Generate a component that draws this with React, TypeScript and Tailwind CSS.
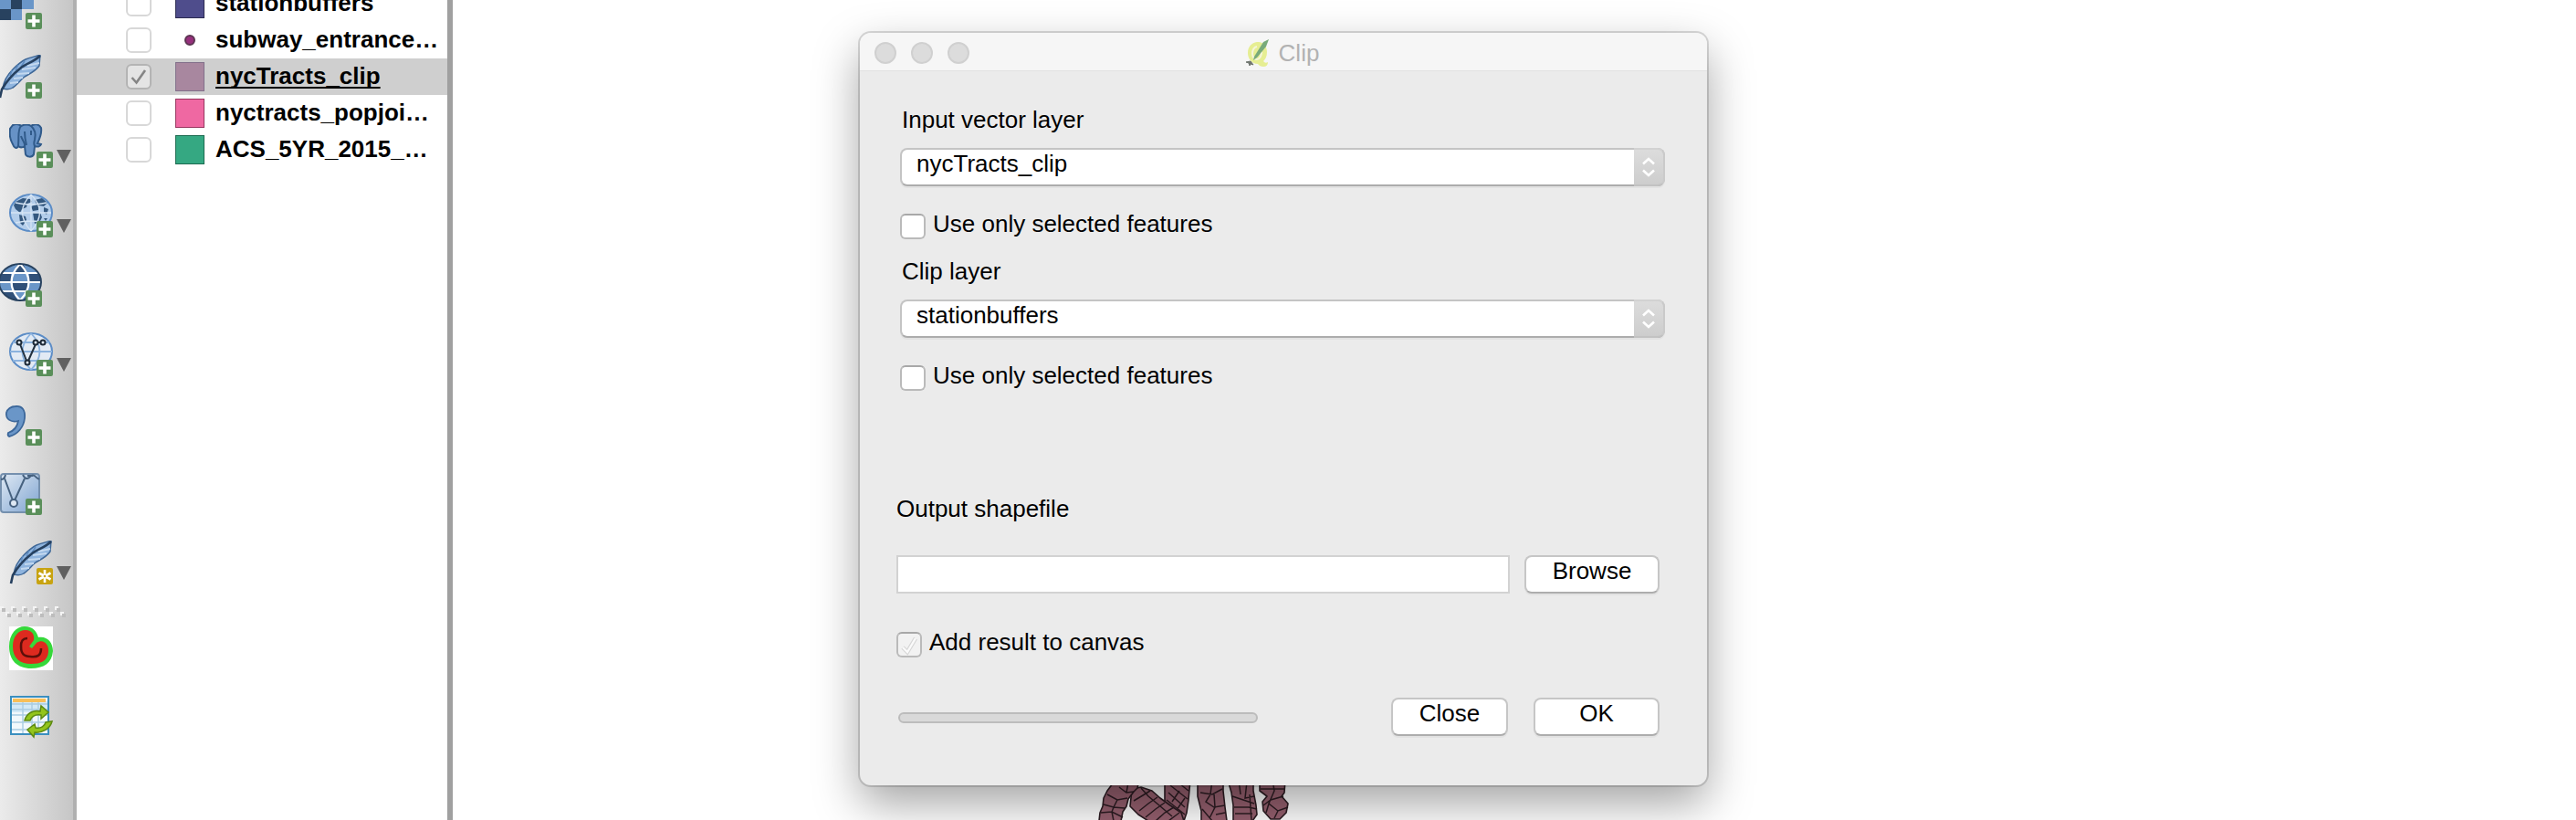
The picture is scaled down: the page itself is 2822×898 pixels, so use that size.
import React from "react";

type IconProps = { children: React.ReactNode };

function Icon({ children }: IconProps) {
  return (
    <svg viewBox="0 0 48 48" className="block h-12 w-12 shrink-0" aria-hidden="true">
      {children}
    </svg>
  );
}

function PlusBadge() {
  return (
    <g>
      <rect x="30" y="30" width="18" height="18" rx="2" fill="#5a8f5a" />
      <path d="M39 32.5v13M32.5 39h13" stroke="#fff" strokeWidth="3.6" />
    </g>
  );
}

function Feather() {
  return (
    <g>
      <path
        d="M46 0C40 2 35 3 30 5C24 8 20 12 16 16C10 22 6 29 5 37C9 38 13 38 16 36C21 33 24 28 29 24C34 21 41 18 45 12Z"
        fill="#8fb4de"
        stroke="#3f6898"
        strokeWidth="1.5"
      />
      <path d="M17 26l10-1M21 21l13-1M26 16l15-2M32 12l13-3M13 31l9-1" stroke="#c3d8ef" strokeWidth="2.2" />
      <path d="M19 17l3-6M25 13l4-6M13 23l2-6" stroke="#5f8cc0" strokeWidth="1.5" />
      <path d="M46 1C39 8 31 9 24 15C15 22 8 31 4 38L2 47" fill="none" stroke="#26405f" strokeWidth="2.6" />
    </g>
  );
}

function RasterIcon() {
  return (
    <Icon>
      <rect x="2" y="2" width="37" height="24" fill="#6a96c8" />
      <path d="M14 14h12v12H14zM2 26h12v12H2zM26 2h13v12H26z" fill="#28425f" />
      <rect x="14" y="26" width="12" height="12" fill="#6a96c8" />
      <PlusBadge />
    </Icon>
  );
}

function VectorIcon() {
  return (
    <Icon>
      <Feather />
      <PlusBadge />
    </Icon>
  );
}

function ElephantIcon() {
  return (
    <Icon>
      <path
        d="M4 1C8-1 11 0 13 2C17 0 21 0 24 2C28-1 33 0 35 4C36 10 34 15 31 21L35 22C34 25 31 25 28 24L27 33C25 37 19 36 18 33L17 24C14 26 12 26 10 24C8 28 5 25 4 22C1 17 0 12 1 5Z"
        fill="#6792c6"
        stroke="#305a8a"
        strokeWidth="2"
      />
      <path
        d="M13 2C9 7 11 12 10 24M17 24C18 21 14 17 13 13M24 2C30 7 29 13 28 17C27 20 27 22 28 24M17 8C17 14 18 19 19 23M24 7v5"
        fill="none"
        stroke="#305a8a"
        strokeWidth="2"
      />
      <PlusBadge />
    </Icon>
  );
}

function WorldIcon() {
  return (
    <Icon>
      <ellipse cx="24" cy="21" rx="23" ry="20" fill="#b3cdea" stroke="#5b8cc6" strokeWidth="2" />
      <path
        d="M7 9l8-4 8 1 2 3-5 2-1 4-5 2-2 4-5-4-2-4zM28 7l8-2 6 5-4 4-5-1-1 5-6 1-2-5 6-2zM11 23l7 2 1 4-4 6-3-3zM26 21l8 0 2 5-4 8-4-1-1-6zM38 15l5 2-2 6-3-3zM38 27l4 0-2 3z"
        fill="#34587f"
      />
      <path d="M2 21h44M24 1v40M7 10Q24 14 41 10M7 32Q24 28 41 32M24 1Q5 20 24 41M24 1Q43 20 24 41" fill="none" stroke="#d5e4f4" strokeWidth="1.3" />
      <PlusBadge />
    </Icon>
  );
}

function GlobeIcon() {
  return (
    <Icon>
      <defs>
        <clipPath id="globe-outline">
          <ellipse cx="24" cy="21" rx="23" ry="20" />
        </clipPath>
      </defs>
      <g clipPath="url(#globe-outline)">
        <rect width="48" height="42" fill="#6a96c8" />
        <path d="M0 11h14v10H0zM34 11h14v10H34zM16 21h17v10H16zM17 11L22 0h5l5 11z" fill="#305078" />
        <path d="M0 31h16q3 7 7 11H0zM33 31h15v11H26q4-4 7-11z" fill="#305078" />
        <path d="M0 21h48M0 11h48M0 31h48M24 1Q5 21 24 41M24 1Q43 21 24 41" fill="none" stroke="#fff" strokeWidth="2.2" />
      </g>
      <ellipse cx="24" cy="21" rx="23" ry="20" fill="none" stroke="#28425f" strokeWidth="2" />
      <PlusBadge />
    </Icon>
  );
}

function WfsIcon() {
  return (
    <Icon>
      <ellipse cx="24" cy="21" rx="23" ry="20" fill="#e2eaf4" stroke="#5b8cc6" strokeWidth="2" />
      <path d="M1 21h46M4 11h40M4 31h40M24 1Q5 21 24 41M24 1Q43 21 24 41" fill="none" stroke="#8bb2de" strokeWidth="1.8" />
      <path d="M12 13l7 18M21 31l8-18M31 11h5" stroke="#22303f" strokeWidth="2" />
      <g fill="#dfe8f2" stroke="#1d2936" strokeWidth="2">
        <circle cx="11" cy="11" r="2.5" />
        <circle cx="29" cy="11" r="2.5" />
        <circle cx="37" cy="11" r="2.5" />
        <circle cx="20" cy="33" r="2.5" />
      </g>
      <PlusBadge />
    </Icon>
  );
}

function CommaIcon() {
  return (
    <Icon>
      <path
        d="M19 5C26 4 30 9 29 18C28 28 21 36 12 38Q10 37 11 34C17 32 21 27 22 21C14 23 8 19 9 12C10 8 14 5 19 5Z"
        fill="#6a96c8"
        stroke="#3c679a"
        strokeWidth="1.8"
      />
      <PlusBadge />
    </Icon>
  );
}

function VirtualIcon() {
  return (
    <Icon>
      <defs>
        <linearGradient id="virtual-fill" x1="0" y1="0" x2="1" y2="1">
          <stop offset="0" stopColor="#dfe9f4" />
          <stop offset="1" stopColor="#7ea3d0" />
        </linearGradient>
      </defs>
      <rect x="3" y="3" width="42" height="42" rx="3" fill="url(#virtual-fill)" stroke="#7590ae" strokeWidth="2" />
      <path d="M7 8l9 24M18 32l11-24M32 5h6" stroke="#46617f" strokeWidth="2" />
      <path d="M3 9q4 0 5-5M27 4q3 6 7 3q4-5 8 0l3 2" fill="none" stroke="#46617f" strokeWidth="2" />
      <circle cx="17" cy="35" r="4" fill="#dfe9f4" stroke="#46617f" strokeWidth="2" />
      <PlusBadge />
    </Icon>
  );
}

function NewLayerIcon() {
  return (
    <Icon>
      <Feather />
      <rect x="30" y="30" width="18" height="18" rx="2" fill="#c8a310" />
      <path d="M39 32v14M32.5 35.5l13 7M32.5 42.5l13-7" stroke="#fff" strokeWidth="2.6" />
      <circle cx="39" cy="39" r="1.3" fill="#c8a310" />
    </Icon>
  );
}

function BufferIcon() {
  return (
    <Icon>
      <rect width="48" height="48" fill="#fff" />
      <path
        d="M17 0C26 0 30 5 32 12C41 10 48 17 48 27C47 40 38 46 24 46C9 46 0 37 0 22C0 8 8 0 17 0Z"
        fill="#36d83a"
      />
      <path
        d="M18 4C25 4 28 9 27 15L22 22L25 24L30 18C37 13 44 19 43 28C42 38 35 41 24 41C11 41 4 34 4 22C4 11 10 4 18 4Z"
        fill="#dd2a1f"
      />
      <path d="M20 13C14 13 13 17 13 22C13 30 16 33 23 33C31 34 35 32 35 24" fill="none" stroke="#5c0f0a" strokeWidth="2.6" />
    </Icon>
  );
}

function TableIcon() {
  return (
    <Icon>
      <rect x="2" y="1" width="41" height="41" fill="#f2f8fc" />
      <rect x="3" y="6" width="39" height="12" fill="#d3e9f7" />
      <path d="M3 9h39M3 15h39M3 21h39M3 29h39M3 37h39M15 3v38M25 3v38M32 3v38" stroke="#a9cce2" strokeWidth="1.4" />
      <rect x="4" y="3" width="36" height="4" fill="#f8bf58" />
      <rect x="2" y="1" width="41" height="41" fill="none" stroke="#3b8fbf" strokeWidth="2" />
      <path
        d="M17 27C19 19 27 15 34 17L35 11L43 18L35 25V21C29 20 25 22 23 27Z"
        fill="#93c51c"
        stroke="#5d8a12"
        strokeWidth="1.5"
      />
      <path
        d="M47 28C45 36 36 41 28 40L27 45L20 37L28 31L29 35C35 36 39 33 40 29Z"
        fill="#93c51c"
        stroke="#5d8a12"
        strokeWidth="1.5"
      />
    </Icon>
  );
}

const layerTools = [
  { label: "Add Raster Layer", icon: RasterIcon, menu: false },
  { label: "Add SpatiaLite Layer", icon: VectorIcon, menu: false },
  { label: "Add PostGIS Layers", icon: ElephantIcon, menu: true },
  { label: "Add WMS Layer", icon: WorldIcon, menu: true },
  { label: "Add WCS Layer", icon: GlobeIcon, menu: false },
  { label: "Add WFS Layer", icon: WfsIcon, menu: true },
  { label: "Add Delimited Text Layer", icon: CommaIcon, menu: false },
  { label: "Add Virtual Layer", icon: VirtualIcon, menu: false },
  { label: "New Layer", icon: NewLayerIcon, menu: true },
];

function Toolbar() {
  return (
    <aside className="flex w-[84px] shrink-0 flex-col overflow-hidden border-r-4 border-[#b0b0b0] bg-linear-to-r from-[#ebebeb] to-[#c6c6c6]">
      <div className="-mt-4 flex flex-col gap-7">
        {layerTools.map(({ label, icon: ToolIcon, menu }) => (
          <button
            key={label}
            type="button"
            aria-label={label}
            className={menu ? "flex items-end gap-1 pl-2.5" : "-ml-0.5 flex items-end"}
          >
            <ToolIcon />
            {menu && (
              <svg viewBox="0 0 16 20" className="h-5 w-4 shrink-0" aria-hidden="true">
                <path d="M0 0h16L8 15z" fill="#606060" />
              </svg>
            )}
          </button>
        ))}
      </div>
      <svg viewBox="0 0 72 12" className="mt-6 h-3 w-[72px]" aria-hidden="true">
        {[0, 1, 2, 3, 4, 5].map((i) => (
          <g key={i}>
            <rect x={i * 12} y="0" width="4" height="4" fill="#f4f4f4" />
            <rect x={i * 12 + 2} y="2" width="4" height="4" fill="#bdbdbd" />
            <rect x={i * 12 + 6} y="6" width="4" height="4" fill="#f4f4f4" />
            <rect x={i * 12 + 8} y="8" width="4" height="4" fill="#bdbdbd" />
          </g>
        ))}
      </svg>
      <div className="mt-2.5 flex flex-col gap-7 pl-2.5">
        <button type="button" aria-label="Buffer">
          <BufferIcon />
        </button>
        <button type="button" aria-label="Refresh table">
          <TableIcon />
        </button>
      </div>
    </aside>
  );
}

const layers = [
  { name: "stationbuffers", swatch: "bg-[#4f4d8c] border-[#2b2a50]", checked: false, dot: false },
  { name: "subway_entrance…", swatch: "", checked: false, dot: true },
  { name: "nycTracts_clip", swatch: "bg-[#a8879f] border-[#82708a]", checked: true, dot: false },
  { name: "nyctracts_popjoi…", swatch: "bg-[#ef68a2] border-[#97375f]", checked: false, dot: false },
  { name: "ACS_5YR_2015_…", swatch: "bg-[#35a882] border-[#1d6b50]", checked: false, dot: false },
];

function LayersPanel() {
  return (
    <section aria-label="Layers" className="w-[412px] shrink-0 overflow-hidden border-r-[6px] border-[#a0a0a0] bg-white">
      <ul className="-mt-4">
        {layers.map((layer) => (
          <li
            key={layer.name}
            className={layer.checked ? "flex h-10 items-center bg-[#cfcfcf] pl-[54px]" : "flex h-10 items-center pl-[54px]"}
          >
            <label className="flex items-center">
              <span className="relative block h-7 w-7">
                <input
                  type="checkbox"
                  defaultChecked={layer.checked}
                  className="peer block h-7 w-7 appearance-none rounded-md border-2 border-[#d8d8d8] bg-white checked:border-[#b4b4b4] checked:bg-[#e4e4e4]"
                />
                <svg viewBox="0 0 28 28" className="pointer-events-none absolute inset-0 hidden h-7 w-7 peer-checked:block" aria-hidden="true">
                  <path d="M6.5 15l5 5.5L21 7" fill="none" stroke="#858585" strokeWidth="2.6" />
                </svg>
              </span>
              {layer.dot ? (
                <span className="ml-[36px] mr-[22px] block h-3 w-3 rounded-full border-2 border-[#5c3552] bg-[#96307c]" />
              ) : (
                <span className={"ml-[26px] mr-3 block h-8 w-8 border " + layer.swatch} />
              )}
              <span
                className={
                  layer.checked
                    ? "whitespace-nowrap pb-0.5 leading-[30px] font-bold underline decoration-2 underline-offset-3 [text-decoration-skip-ink:none]"
                    : "whitespace-nowrap pb-0.5 leading-[30px] font-bold"
                }
              >
                {layer.name}
              </span>
            </label>
          </li>
        ))}
      </ul>
    </section>
  );
}

function TractShapes() {
  return (
    <svg viewBox="0 0 214 44" className="absolute bottom-0 left-[704px] h-11 w-[214px]" aria-hidden="true">
      <g fill="#96606f" stroke="#2c1c22" strokeWidth="1.6" strokeLinejoin="round">
        <path d="M76 0L104 0L102 22L100 36L97 45L76 45L76 26Z" />
        <path d="M40 10L50 8L62 12L71 20L82 28L94 36L97 45L58 45L47 38L38 29Z" />
        <path d="M22 0L48 0L46 9L42 13L36 21L34 29L30 35L28 45L4 45L5 36L8 29L9 20L13 12Z" />
        <path d="M112 0L140 0L140 12L142 30L144 45L116 45L116 34L112 18Z" />
        <path d="M145 0L173 0L173 12L176 28L177 38L172 45L151 45L151 28L149 14Z" />
        <path d="M180 0L208 0L207 14L204 18L211 26L209 36L202 43L192 43L184 34L183 24L188 18L180 12Z" />
      </g>
      <path
        d="M13 16L24 22L35 20M9 27L20 30L32 31M6 36L18 35L30 41M26 8L34 14L42 13M24 22L20 30L18 35L20 45M36 3L34 14M42 23L52 17L60 12M48 34L58 26L68 19M55 41L66 32L76 25M66 45L76 36L86 30M80 45L92 36M50 9L58 18L70 28L84 40M80 14L98 30M82 6L101 21M92 4L102 12M78 22L98 38M92 12L84 24M98 20L89 33M115 14L128 16L139 10M128 0L126 16L121 24L130 30L142 28M130 16L131 30L125 42M117 32L128 45M132 38L142 36M157 0L159 16M166 2L164 20L174 18M150 18L162 22L174 26M152 30L168 30L177 32M153 37L172 37M169 16L171 45M181 10L207 10M194 0L196 12L190 26L200 34L211 30M184 28L192 22L206 18M190 26L187 36M200 34L196 42"
        fill="none"
        stroke="#2c1c22"
        strokeWidth="1.5"
      />
    </svg>
  );
}

function LayerSelect({ id, options, value }: { id: string; options: string[]; value: string }) {
  return (
    <div className="relative mt-4">
      <select
        id={id}
        defaultValue={value}
        className="block h-[42px] w-full appearance-none rounded-lg border-2 border-[#c4c4c4] border-b-[#acacac] bg-white pt-0 pb-2 pl-4 leading-[30px] shadow-[0_2px_0_#e2e2e2]"
      >
        {options.map((option) => (
          <option key={option}>{option}</option>
        ))}
      </select>
      <span className="pointer-events-none absolute inset-y-0 right-0 flex w-[34px] items-center justify-center rounded-r-lg border-y-2 border-r-2 border-t-[#d2d2d2] border-r-[#cacaca] border-b-[#c2c2c2] bg-linear-to-b from-[#dcdcdc] to-[#cdcdcd]">
        <svg viewBox="0 0 16 24" className="h-6 w-4" aria-hidden="true">
          <path d="M2 8.5L8 3L14 8.5M2 15.5L8 21L14 15.5" fill="none" stroke="#fff" strokeWidth="2.6" />
        </svg>
      </span>
    </div>
  );
}

function CheckRow({ label, checked = false, className }: { label: string; checked?: boolean; className: string }) {
  return (
    <label className={"flex w-fit items-start gap-2 leading-[30px] " + className}>
      <span className="relative mt-1 block h-7 w-7">
        <input
          type="checkbox"
          defaultChecked={checked}
          className="peer block h-7 w-7 appearance-none rounded-md border-2 border-[#bababa] border-t-[#a8a8a8] bg-white checked:bg-[#f2f2f2]"
        />
        <svg viewBox="0 0 28 28" className="pointer-events-none absolute inset-0 hidden h-7 w-7 peer-checked:block" aria-hidden="true">
          <path d="M7 17l5 5L21 7" fill="none" stroke="#d6d6d6" strokeWidth="4.5" />
          <path d="M7 17l5 5L21 7" fill="none" stroke="#fafafa" strokeWidth="2.4" />
        </svg>
      </span>
      {label}
    </label>
  );
}

function PushButton({ label, className }: { label: string; className: string }) {
  return (
    <button
      type="button"
      className={
        "h-[42px] shrink-0 rounded-lg border-2 border-[#c6c6c6] border-b-[#adadad] bg-white pb-2 leading-[30px] shadow-[0_2px_0_#e2e2e2] " +
        className
      }
    >
      {label}
    </button>
  );
}

function ClipDialog() {
  const names = ["stationbuffers", "nycTracts_clip"];
  return (
    <div
      role="dialog"
      aria-labelledby="clip-title"
      className="absolute top-9 left-[446px] w-[928px] rounded-xl bg-[#ebebeb] shadow-[0_0_0_2px_rgba(0,0,0,0.14),0_20px_50px_rgba(0,0,0,0.36)]"
    >
      <header className="grid h-[42px] grid-cols-3 items-center rounded-t-xl border-b border-[#e2e2e2] bg-[#f6f6f6] pt-[3px]">
        <div className="flex gap-4 pl-4">
          <button type="button" aria-label="Close window" className="h-6 w-6 rounded-full border-2 border-[#d0d0d0] bg-[#dcdcdc]" />
          <button type="button" aria-label="Minimize window" className="h-6 w-6 rounded-full border-2 border-[#d0d0d0] bg-[#dcdcdc]" />
          <button type="button" aria-label="Zoom window" className="h-6 w-6 rounded-full border-2 border-[#d0d0d0] bg-[#dcdcdc]" />
        </div>
        <div className="flex items-center justify-center gap-2.5 pr-0.5">
          <svg viewBox="0 0 26 32" className="h-8 w-[26px]" aria-hidden="true">
            <path
              d="M12 4C19 3 23 9 23 15C23 20 21 23 19 25Q21 28 24 26Q24 31 19 31Q15 31 13 28C6 28 2 22 2 16C2 9 6 5 12 4Z"
              fill="#e6ee93"
            />
            <path d="M12 9C8 10 7 14 7 17C7 20 9 23 12 23C15 23 17 19 17 15" fill="none" stroke="#f5f5dc" strokeWidth="2" />
            <path d="M25 1L19 4L9 20L8 24L12 21L22 9Z" fill="#78aa7a" />
            <path d="M0 26l5-1 3 4-3-1-1 2-1-3z" fill="#6f756f" stroke="#6f756f" />
          </svg>
          <h1 id="clip-title" className="leading-[30px] text-[#b2b2b2]">
            Clip
          </h1>
        </div>
      </header>

      <form onSubmit={(event) => event.preventDefault()} className="pt-[38px] pb-[54px]">
        <div className="pr-[46px] pl-11">
          <label htmlFor="input-layer" className="block pl-0.5 leading-[30px]">
            Input vector layer
          </label>
          <LayerSelect id="input-layer" options={names} value="nycTracts_clip" />
          <CheckRow label="Use only selected features" className="mt-[26px]" />
          <label htmlFor="clip-layer" className="mt-5 block pl-0.5 leading-[30px]">
            Clip layer
          </label>
          <LayerSelect id="clip-layer" options={names} value="stationbuffers" />
          <CheckRow label="Use only selected features" className="mt-[26px]" />
        </div>

        <div className="mt-[114px] pr-[52px] pl-10">
          <label htmlFor="output-file" className="block leading-[30px]">
            Output shapefile
          </label>
          <div className="mt-9 flex gap-4">
            <input id="output-file" type="text" className="h-[42px] min-w-0 flex-1 border-2 border-[#d2d2d2] bg-white px-2" />
            <PushButton label="Browse" className="w-[148px]" />
          </div>
          <CheckRow label="Add result to canvas" checked className="mt-[38px]" />
          <div className="mt-11 flex items-center gap-7">
            <div className="flex-1 pt-0.5 pl-0.5">
              <progress
                value={0}
                max={100}
                aria-label="Progress"
                className="block h-3 w-[394px] appearance-none rounded-full border-2 border-[#bcbcbc] bg-[#d9d9d9] [&::-webkit-progress-bar]:bg-transparent"
              />
            </div>
            <PushButton label="Close" className="w-32" />
            <PushButton label="OK" className="w-[138px]" />
          </div>
        </div>
      </form>
    </div>
  );
}

export default function App() {
  return (
    <div className="flex h-screen overflow-hidden bg-white font-['Liberation_Sans',Arial,sans-serif] text-[26px] text-black">
      <Toolbar />
      <LayersPanel />
      <main className="relative flex-1 overflow-hidden bg-white">
        <TractShapes />
        <ClipDialog />
      </main>
    </div>
  );
}
